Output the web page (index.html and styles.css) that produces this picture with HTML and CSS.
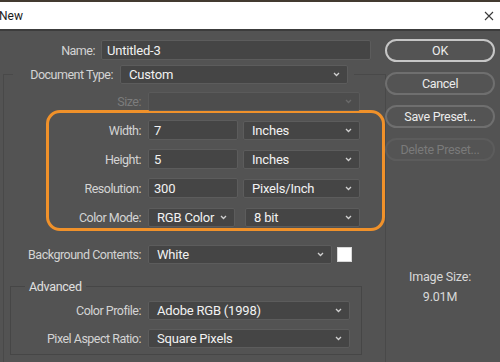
FILE: index.html
```html
<!DOCTYPE html>
<html lang="en">
<head>
  <meta charset="UTF-8">
  <meta name="viewport" content="width=device-width, initial-scale=1.0">
  <link rel="stylesheet" href="styles.css">
  <title>New</title>
</head>
<body>
  <header class="titlebar">
    <span class="title">New</span>
    <svg class="close" width="10" height="10" viewBox="0 0 10 10"><path d="M1 1L9 9M9 1L1 9" stroke="#3a3a3a" stroke-width="1.1" fill="none"/></svg>
  </header>

  <div class="dialog">
    <div class="main">
      <div class="row name-row">
        <label for="name">Name:</label>
        <input type="text" id="name" class="field w-name" value="Untitled-3">
      </div>

      <fieldset class="group">
        <legend>
          <div class="legend-row">
            <label>Document Type:</label>
            <div class="field select w-doc">Custom<svg class="chev" width="7" height="5" viewBox="0 0 7 5"><path d="M1 1L3.5 3.5L6 1" stroke="#d0d0d0" stroke-width="1.3" fill="none"/></svg></div>
          </div>
        </legend>

        <div class="row size-row disabled">
          <label>Size:</label>
          <div class="field select w-size"><svg class="chev" width="7" height="5" viewBox="0 0 7 5"><path d="M1 1L3.5 3.5L6 1" stroke="#6a6a6a" stroke-width="1.3" fill="none"/></svg></div>
        </div>

        <div class="highlight">
          <div class="row">
            <label for="width">Width:</label>
            <input type="text" id="width" class="field w-num" value="7">
            <div class="field select w-unit">Inches<svg class="chev" width="7" height="5" viewBox="0 0 7 5"><path d="M1 1L3.5 3.5L6 1" stroke="#d0d0d0" stroke-width="1.3" fill="none"/></svg></div>
          </div>
          <div class="row">
            <label for="height">Height:</label>
            <input type="text" id="height" class="field w-num" value="5">
            <div class="field select w-unit">Inches<svg class="chev" width="7" height="5" viewBox="0 0 7 5"><path d="M1 1L3.5 3.5L6 1" stroke="#d0d0d0" stroke-width="1.3" fill="none"/></svg></div>
          </div>
          <div class="row">
            <label for="res">Resolution:</label>
            <input type="text" id="res" class="field w-num" value="300">
            <div class="field select w-unit">Pixels/Inch<svg class="chev" width="7" height="5" viewBox="0 0 7 5"><path d="M1 1L3.5 3.5L6 1" stroke="#d0d0d0" stroke-width="1.3" fill="none"/></svg></div>
          </div>
          <div class="row">
            <label>Color Mode:</label>
            <div class="field select w-mode">RGB Color<svg class="chev" width="7" height="5" viewBox="0 0 7 5"><path d="M1 1L3.5 3.5L6 1" stroke="#d0d0d0" stroke-width="1.3" fill="none"/></svg></div>
            <div class="field select w-bit">8 bit<svg class="chev" width="7" height="5" viewBox="0 0 7 5"><path d="M1 1L3.5 3.5L6 1" stroke="#d0d0d0" stroke-width="1.3" fill="none"/></svg></div>
          </div>
        </div>

        <div class="row bg-row">
          <label>Background Contents:</label>
          <div class="field select w-bg">White<svg class="chev" width="7" height="5" viewBox="0 0 7 5"><path d="M1 1L3.5 3.5L6 1" stroke="#d0d0d0" stroke-width="1.3" fill="none"/></svg></div>
          <span class="swatch"></span>
        </div>

        <fieldset class="advanced">
          <legend>Advanced</legend>
          <div class="row profile-row">
            <label>Color Profile:</label>
            <div class="field select w-adv">Adobe RGB (1998)<svg class="chev" width="7" height="5" viewBox="0 0 7 5"><path d="M1 1L3.5 3.5L6 1" stroke="#d0d0d0" stroke-width="1.3" fill="none"/></svg></div>
          </div>
          <div class="row ratio-row">
            <label>Pixel Aspect Ratio:</label>
            <div class="field select w-adv">Square Pixels<svg class="chev" width="7" height="5" viewBox="0 0 7 5"><path d="M1 1L3.5 3.5L6 1" stroke="#d0d0d0" stroke-width="1.3" fill="none"/></svg></div>
          </div>
        </fieldset>
      </fieldset>
    </div>

    <aside class="side">
      <button class="btn default">OK</button>
      <button class="btn">Cancel</button>
      <button class="btn">Save Preset...</button>
      <button class="btn" disabled>Delete Preset...</button>
      <div class="info">
        <div>Image Size:</div>
        <div>9.01M</div>
      </div>
    </aside>
  </div>
</body>
</html>
```

FILE: styles.css
```css
*, *::before, *::after {
  margin: 0;
  padding: 0;
  box-sizing: border-box;
}

body {
  height: 362px;
  overflow: hidden;
  background: #535353;
  color: #d4d4d4;
  font-family: Roboto, "Noto Sans", sans-serif;
  font-size: 12px;
}

.titlebar {
  display: flex;
  align-items: center;
  justify-content: space-between;
  height: 31px;
  background: #fff;
  border-top: 2px solid #433a30;
  border-bottom: 2px solid #3c3c3c;
}

.title {
  margin-left: -1px;
  color: #1a1a1a;
  font-size: 12px;
}

.close {
  margin-right: 6px;
}

.dialog {
  display: flex;
  padding-top: 9px;
}

.main {
  width: 371px;
}

/* rows */
.row {
  display: flex;
  align-items: center;
  height: 20px;
}

label {
  text-align: right;
  margin-right: 7px;
  white-space: nowrap;
  font-size: 12.5px;
  letter-spacing: -0.5px;
}

.field {
  height: 20px;
  background: #454545;
  border: 1px solid #5c5c5c;
  border-radius: 2px;
  color: #f2f2f2;
  font: inherit;
  font-size: 13px;
  letter-spacing: -0.2px;
  padding: 0 5px;
}

input.field {
  outline: none;
}

.select {
  display: flex;
  align-items: center;
  height: 19px;
  padding: 0 7px 0 8px;
}

.chev {
  flex-shrink: 0;
  margin-left: auto;
}

.name-row label {
  width: 95px;
  margin-right: 6px;
}

.w-name { width: 270px; }
.w-doc { width: 228px; }
.w-size { width: 212px; }
.w-num { width: 90px; margin-right: 5px; }
.w-unit { width: 117px; }
.w-mode { width: 87px; margin-right: 10px; }
.w-bit { width: 115px; }
.w-bg { width: 184px; }
.w-adv { width: 202px; }

/* outer group */
.group {
  margin: 4px 0 0 3px;
  width: 364px;
  border: 1px solid #494949;
  padding: 0 0 40px;
}

.group > legend {
  margin-left: 9px;
  padding: 0 6px 0 0;
}

.legend-row {
  display: flex;
  align-items: center;
  height: 20px;
}

.legend-row label {
  width: 100px;
}

.group > .row label {
  width: 137px;
}

.size-row {
  margin-top: 8px;
  height: 18px;
}

.disabled label {
  color: #7c7c7c;
}

.disabled .field {
  background: #4d4d4d;
  border-color: #5a5a5a;
}

/* orange annotation around the size rows */
.highlight {
  margin-left: 42px;
  width: 339px;
  border: 3px solid #f0912a;
  border-radius: 14px;
  padding: 7px 0 1px;
  display: flex;
  flex-direction: column;
  gap: 9px;
}

.highlight label {
  width: 92px;
}

.bg-row {
  margin-top: 13px;
}

.swatch {
  width: 15px;
  height: 15px;
  margin-left: 5px;
  background: #fff;
  border: 1px solid #d8d8d8;
}

/* advanced group */
.advanced {
  margin: 15px 0 0 6px;
  width: 352px;
  border: 1px solid #464646;
  padding: 0 0 6px;
}

.advanced > legend {
  margin-left: 14px;
  padding: 0 4px;
  color: #e0e0e0;
  font-size: 12.5px;
  letter-spacing: -0.3px;
}

.advanced label {
  width: 130px;
}

.profile-row {
  margin-top: 6px;
}

.ratio-row {
  margin-top: 8px;
}

/* right column */
.side {
  width: 110px;
  margin: -1px 0 0 14px;
  display: flex;
  flex-direction: column;
  gap: 10px;
}

.btn {
  height: 23px;
  border-radius: 12px;
  border: 2px solid #6f6f6f;
  background: #545454;
  color: #ececec;
  font: inherit;
  font-size: 12.5px;
  letter-spacing: -0.3px;
}

.btn.default {
  border-color: #c6c6c6;
}

.btn:disabled {
  border-color: #5c5c5c;
  color: #7a7a7a;
}

.info {
  margin-top: 96px;
  text-align: center;
  line-height: 20px;
  color: #d8d8d8;
  font-size: 12.5px;
  letter-spacing: -0.2px;
}
```
